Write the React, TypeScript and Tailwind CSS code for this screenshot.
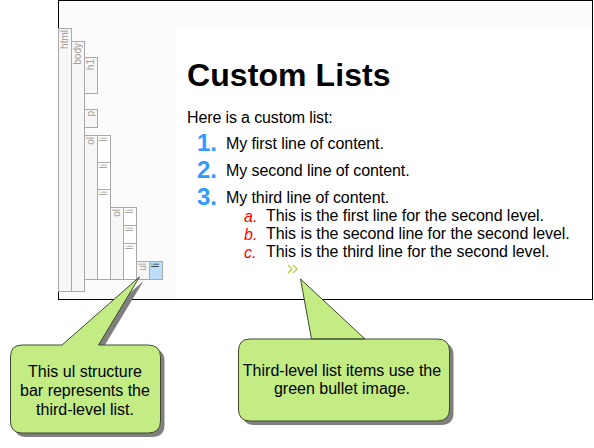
const FONT = "font-['Liberation_Sans',Arial,sans-serif]";

type Node = {
  tag: string;
  height: number;
  blue?: boolean;
  pad?: string;
  kids?: Node[];
};

// document tree drawn by the structure bars
const tree: Node = {
  tag: 'html',
  height: 264,
  pad: 'pt-[13px] pb-0',
  kids: [
    {
      tag: 'body',
      height: 251,
      pad: 'pt-[16px]',
      kids: [
        { tag: 'h1', height: 37 },
        { tag: 'p', height: 19 },
        {
          tag: 'ol',
          height: 145,
          kids: [
            { tag: 'li', height: 28 },
            { tag: 'li', height: 28 },
            {
              tag: 'li',
              height: 91,
              pad: 'pt-[18px]',
              kids: [
                {
                  tag: 'ol',
                  height: 73,
                  kids: [
                    { tag: 'li', height: 19 },
                    { tag: 'li', height: 19 },
                    {
                      tag: 'li',
                      height: 37,
                      pad: 'pt-[18px]',
                      kids: [{ tag: 'ul', height: 19, kids: [{ tag: 'li', height: 19, blue: true }] }],
                    },
                  ],
                },
              ],
            },
          ],
        },
      ],
    },
  ],
};

function Bar({ node }: { node: Node }) {
  const isOdd = node.tag === 'li';
  return (
    <div className="flex items-start">
      <div
        className={`w-[14px] shrink-0 border border-[#a9a9a9] flex justify-center items-start pt-px overflow-hidden ${
          node.blue ? 'bg-[#bbdefb]' : isOdd ? 'bg-white' : 'bg-[#f7f7f7]'
        }`}
        style={{ height: node.height }}
      >
        <span
          className={`[writing-mode:vertical-rl] rotate-180 text-[10px] leading-[12px] ${
            node.blue ? 'text-[#333]' : 'text-[#a59a94]'
          }`}
        >
          {node.tag}
        </span>
      </div>
      {node.kids && (
        <div className={`flex flex-col -ml-px ${node.pad ?? ''}`}>
          {node.kids.map((kid, i) => (
            <div
              key={i}
              className={
                node.tag === 'body' && i > 0
                  ? i === 1
                    ? 'mt-[15px]'
                    : 'mt-[7px]'
                  : i > 0
                    ? '-mt-px'
                    : ''
              }
            >
              <Bar node={kid} />
            </div>
          ))}
        </div>
      )}
    </div>
  );
}

function Callout({
  className,
  width,
  height,
  shape,
  textClass,
  lines,
}: {
  className: string;
  width: number;
  height: number;
  shape: string;
  textClass: string;
  lines: string[];
}) {
  return (
    <div className={`absolute ${className}`}>
      <svg width={width} height={height} className="block">
        <path d={shape} fill="#808080" transform="translate(4 4)" />
        <path d={shape} fill="#c3ec85" stroke="#3f4a30" strokeWidth="1" />
      </svg>
      <div className={`absolute text-center text-[16px] text-black ${textClass}`}>
        {lines.map((line) => (
          <div key={line}>{line}</div>
        ))}
      </div>
    </div>
  );
}

export default function App() {
  return (
    <div className={`relative w-[594px] h-[448px] bg-white overflow-hidden ${FONT}`}>
      {/* Browser shot */}
      <div className="ml-[58px] w-[535px] h-[300px] border border-black bg-[#fbfbfb] flex flex-col">
        <div className="h-[25px] shrink-0" />
        <div className="flex flex-1 min-h-0">
          <div className="w-[117px] shrink-0 pt-[2px] -ml-px">
            <Bar node={tree} />
          </div>
          <div className="flex-1 bg-white pl-[11px] ml-px text-black text-[16px] leading-[18px]">
            <h1 className="text-[32px] leading-[37px] font-bold mt-[31px] tracking-[0.08px]">Custom Lists</h1>
            <p className="mt-[15px] tracking-[-0.13px]">Here is a custom list:</p>
            <ol className="mt-[3px]">
              {['My first line of content.', 'My second line of content.', 'My third line of content.'].map((text, i) => (
                <li key={text} className="flex h-[27px] items-center pl-[10px]">
                  <span className="w-[29px] text-[24px] leading-[27px] font-bold text-[#3399ff] -translate-y-px">{i + 1}.</span>
                  <span className="tracking-[-0.09px]">{text}</span>
                </li>
              ))}
            </ol>
            <ol className="pl-[57px] -mt-[4px]">
              {[
                ['a.', 'This is the first line for the second level.'],
                ['b.', 'This is the second line for the second level.'],
                ['c.', 'This is the third line for the second level.'],
              ].map(([mark, text]) => (
                <li key={mark} className="flex h-[18px]">
                  <span className="w-[22px] italic text-[#ff0000] translate-y-px">{mark}</span>
                  <span className="tracking-[-0.05px]">{text}</span>
                </li>
              ))}
            </ol>
            <div className="pl-[100px] pt-[3px]">
              <svg width="11" height="10" viewBox="0 0 11 10" fill="none" stroke="#b5cf3c" strokeWidth="1.3" className="block">
                <path d="M1 1 L5 5 L1 9 M6 1 L10 5 L6 9" />
              </svg>
            </div>
          </div>
        </div>
      </div>

      <Callout
        className="left-0 top-[270px]"
        width={170}
        height={178}
        shape="M139.5 7 L98.5 75 H148 Q160.5 75 160.5 87 V151 Q160.5 163 148 163 H22 Q10.5 163 10.5 151 V87 Q10.5 75 22 75 H62 Z"
        textClass="left-[10px] top-[92px] w-[150px] leading-[19px]"
        lines={['This ul structure', 'bar represents the', 'third-level list.']}
      />
      <Callout
        className="left-[230px] top-[270px]"
        width={230}
        height={160}
        shape="M70.5 9 L81.5 69 H207 Q219.5 69 219.5 81 V139 Q219.5 151 207 151 H20 Q8.5 151 8.5 139 V81 Q8.5 69 20 69 H135 Z"
        textClass="left-[6px] top-[92px] w-[212px] leading-[18px]"
        lines={['Third-level list items use the', 'green bullet image.']}
      />
    </div>
  );
}
